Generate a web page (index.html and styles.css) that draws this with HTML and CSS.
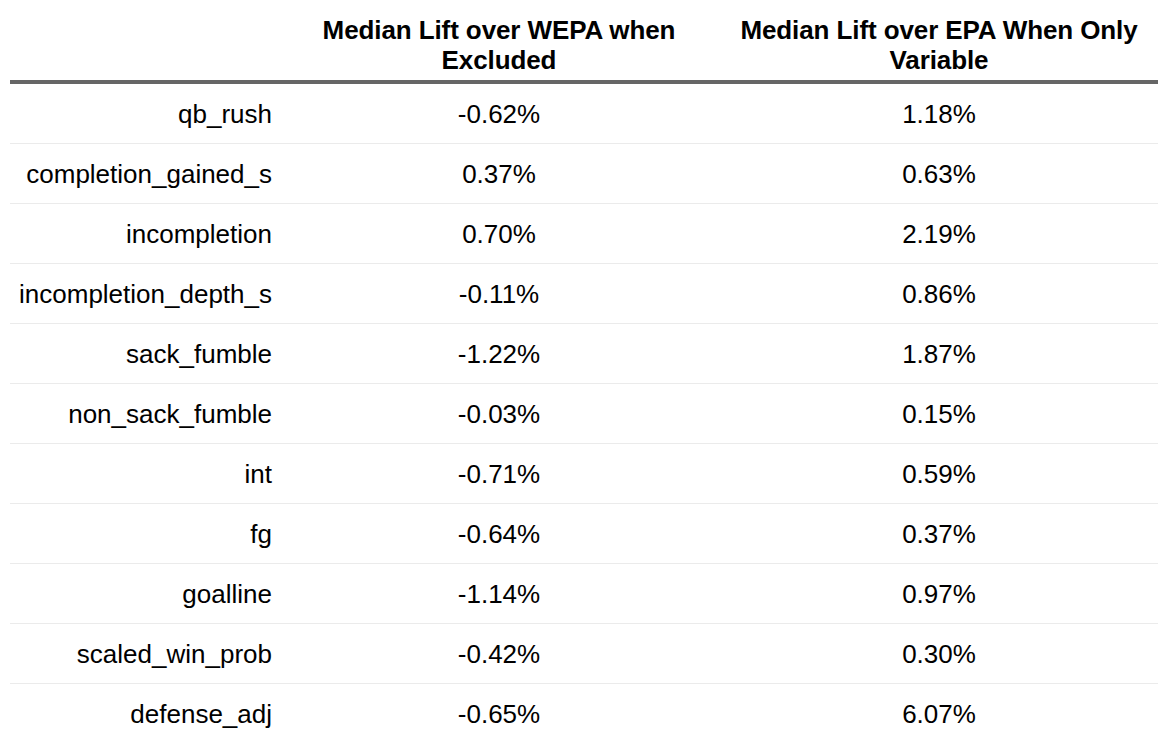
FILE: index.html
```html
<!DOCTYPE html>
<html>
<head>
<meta charset="utf-8">
<link rel="stylesheet" href="styles.css">
</head>
<body>
<table class="lift-table">
  <colgroup>
    <col class="col-name">
    <col class="col-excl">
    <col class="col-only">
  </colgroup>
  <thead>
    <tr>
      <th class="h-name"></th>
      <th class="h-val">Median Lift over WEPA when Excluded</th>
      <th class="h-val">Median Lift over EPA When Only Variable</th>
    </tr>
  </thead>
  <tbody>
    <tr><td class="name">qb_rush</td><td class="val">-0.62%</td><td class="val">1.18%</td></tr>
    <tr><td class="name">completion_gained_s</td><td class="val">0.37%</td><td class="val">0.63%</td></tr>
    <tr><td class="name">incompletion</td><td class="val">0.70%</td><td class="val">2.19%</td></tr>
    <tr><td class="name">incompletion_depth_s</td><td class="val">-0.11%</td><td class="val">0.86%</td></tr>
    <tr><td class="name">sack_fumble</td><td class="val">-1.22%</td><td class="val">1.87%</td></tr>
    <tr><td class="name">non_sack_fumble</td><td class="val">-0.03%</td><td class="val">0.15%</td></tr>
    <tr><td class="name">int</td><td class="val">-0.71%</td><td class="val">0.59%</td></tr>
    <tr><td class="name">fg</td><td class="val">-0.64%</td><td class="val">0.37%</td></tr>
    <tr><td class="name">goalline</td><td class="val">-1.14%</td><td class="val">0.97%</td></tr>
    <tr><td class="name">scaled_win_prob</td><td class="val">-0.42%</td><td class="val">0.30%</td></tr>
    <tr><td class="name">defense_adj</td><td class="val">-0.65%</td><td class="val">6.07%</td></tr>
  </tbody>
</table>
</body>
</html>
```

FILE: styles.css
```css
html, body {
  margin: 0;
  padding: 0;
  background: #ffffff;
}

body {
  font-family: "Liberation Sans", Arial, Helvetica, sans-serif;
  color: #000000;
  overflow: hidden;
}

.lift-table {
  margin-left: 10px;
  width: 1148px;
  border-collapse: collapse;
  table-layout: fixed;
  font-size: 26px;
}

.col-name { width: 268px; }
.col-excl { width: 442px; }
.col-only { width: 438px; }

.lift-table th {
  font-weight: bold;
  font-size: 26px;
  line-height: 30px;
  text-align: center;
  vertical-align: bottom;
  padding: 15px 0 5px 0;
  border-bottom: 4px solid #666666;
  letter-spacing: -0.1px;
}

.lift-table td {
  height: 59px;
  padding: 0;
  line-height: 30px;
  vertical-align: middle;
  border-bottom: 1px solid #ebebeb;
}

.lift-table td.name {
  text-align: right;
  padding-right: 6px;
}

.lift-table td.val {
  text-align: center;
}
```
